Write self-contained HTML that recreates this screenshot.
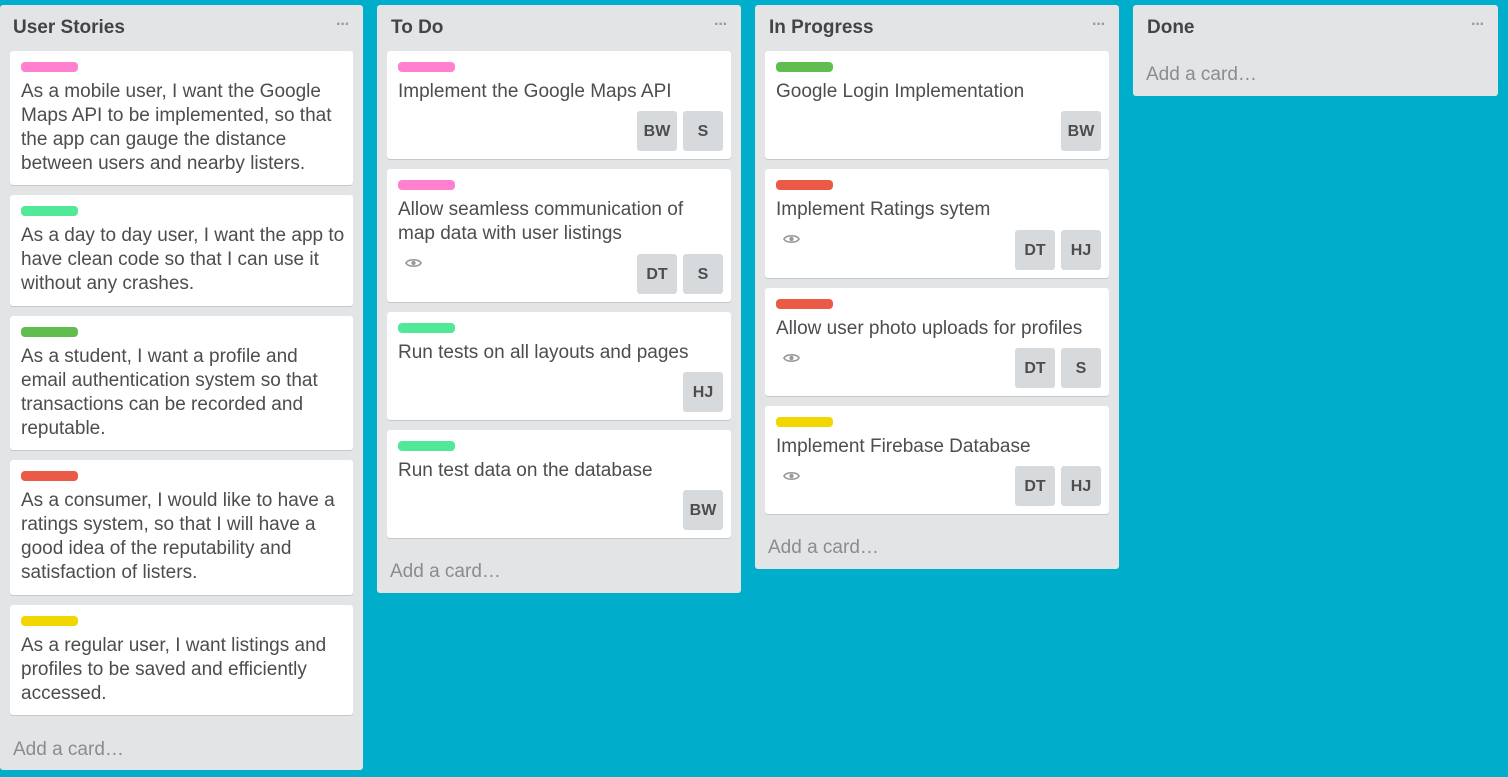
<!DOCTYPE html>
<html><head><meta charset="utf-8"><style>
*{box-sizing:border-box;margin:0;padding:0}
body{width:1508px;height:777px;background:#00aecc;font-family:"Liberation Sans",Arial,sans-serif;position:relative;overflow:hidden}
.list{position:absolute;top:5px;background:#e2e4e6;border-radius:3px}
.title{position:absolute;left:14px;top:12px;font-weight:bold;font-size:19px;color:#444}
.dots{position:absolute;right:14px;top:11px;color:#999;font-size:16px;font-weight:bold;letter-spacing:-1px}
.card{position:absolute;left:10px;right:10px;background:#fff;border-radius:3px;box-shadow:0 1px 0 #c4c9cc}
.lab{position:absolute;left:11px;top:11px;width:57px;height:10px;border-radius:4px}
.txt{position:absolute;left:11px;top:29px;right:12px;font-size:19px;line-height:24px;color:#4d4d4d}
.av{position:absolute;bottom:8px;width:40px;height:40px;background:#d6dadc;border-radius:3px;color:#4d4d4d;font-weight:bold;font-size:16px;text-align:center;line-height:42px}
.add{position:absolute;left:13px;font-size:19px;color:#8c8c8c}
.eye{position:absolute;left:18px;width:17px;height:12px}
</style></head><body>
<svg width="0" height="0" style="position:absolute"><defs><symbol id="e" viewBox="0 0 18 12"><path d="M1 6C3.5 1.5 14.5 1.5 17 6C14.5 10.5 3.5 10.5 1 6Z" fill="none" stroke="#999" stroke-width="1.8"/><circle cx="9" cy="6" r="2.3" fill="#999"/></symbol></defs></svg>

<div class="list" style="left:0;width:363px;height:765px">
<div class="title" style="left:13px">User Stories</div><div class="dots">···</div>
<div class="card" style="top:46px;height:134px"><div class="lab" style="background:#ff80ce"></div><div class="txt">As a mobile user, I want the Google Maps API to be implemented, so that the app can gauge the distance between users and nearby listers.</div></div>
<div class="card" style="top:190px;height:111px"><div class="lab" style="background:#51e898"></div><div class="txt" style="right:4px">As a day to day user, I want the app to<br>have clean code so that I can use it without any crashes.</div></div>
<div class="card" style="top:311px;height:134px"><div class="lab" style="background:#61bd4f"></div><div class="txt">As a student, I want a profile and email authentication system so that transactions can be recorded and reputable.</div></div>
<div class="card" style="top:455px;height:135px"><div class="lab" style="background:#eb5a46"></div><div class="txt">As a consumer, I would like to have a ratings system, so that I will have a good idea of the reputability and satisfaction of listers.</div></div>
<div class="card" style="top:600px;height:110px"><div class="lab" style="background:#f2d600"></div><div class="txt">As a regular user, I want listings and profiles to be saved and efficiently accessed.</div></div>
<div class="add" style="top:734px">Add a card…</div>
</div>

<div class="list" style="left:377px;width:364px;height:588px">
<div class="title">To Do</div><div class="dots">···</div>
<div class="card" style="top:46px;height:108px"><div class="lab" style="background:#ff80ce"></div><div class="txt">Implement the Google Maps API</div><div class="av" style="right:54px">BW</div><div class="av" style="right:8px">S</div></div>
<div class="card" style="top:164px;height:133px"><div class="lab" style="background:#ff80ce"></div><div class="txt">Allow seamless communication of<br>map data with user listings</div><svg class="eye" style="top:88px"><use href="#e"/></svg><div class="av" style="right:54px">DT</div><div class="av" style="right:8px">S</div></div>
<div class="card" style="top:307px;height:108px"><div class="lab" style="background:#51e898"></div><div class="txt">Run tests on all layouts and pages</div><div class="av" style="right:8px">HJ</div></div>
<div class="card" style="top:425px;height:108px"><div class="lab" style="background:#51e898"></div><div class="txt">Run test data on the database</div><div class="av" style="right:8px">BW</div></div>
<div class="add" style="top:556px">Add a card…</div>
</div>

<div class="list" style="left:755px;width:364px;height:564px">
<div class="title">In Progress</div><div class="dots">···</div>
<div class="card" style="top:46px;height:108px"><div class="lab" style="background:#61bd4f"></div><div class="txt">Google Login Implementation</div><div class="av" style="right:8px">BW</div></div>
<div class="card" style="top:164px;height:109px"><div class="lab" style="background:#eb5a46"></div><div class="txt">Implement Ratings sytem</div><svg class="eye" style="top:64px"><use href="#e"/></svg><div class="av" style="right:54px">DT</div><div class="av" style="right:8px">HJ</div></div>
<div class="card" style="top:283px;height:108px"><div class="lab" style="background:#eb5a46"></div><div class="txt">Allow user photo uploads for profiles</div><svg class="eye" style="top:64px"><use href="#e"/></svg><div class="av" style="right:54px">DT</div><div class="av" style="right:8px">S</div></div>
<div class="card" style="top:401px;height:108px"><div class="lab" style="background:#f2d600"></div><div class="txt">Implement Firebase Database</div><svg class="eye" style="top:64px"><use href="#e"/></svg><div class="av" style="right:54px">DT</div><div class="av" style="right:8px">HJ</div></div>
<div class="add" style="top:532px">Add a card…</div>
</div>

<div class="list" style="left:1133px;width:365px;height:91px">
<div class="title">Done</div><div class="dots">···</div>
<div class="add" style="top:59px">Add a card…</div>
</div>
</body></html>
